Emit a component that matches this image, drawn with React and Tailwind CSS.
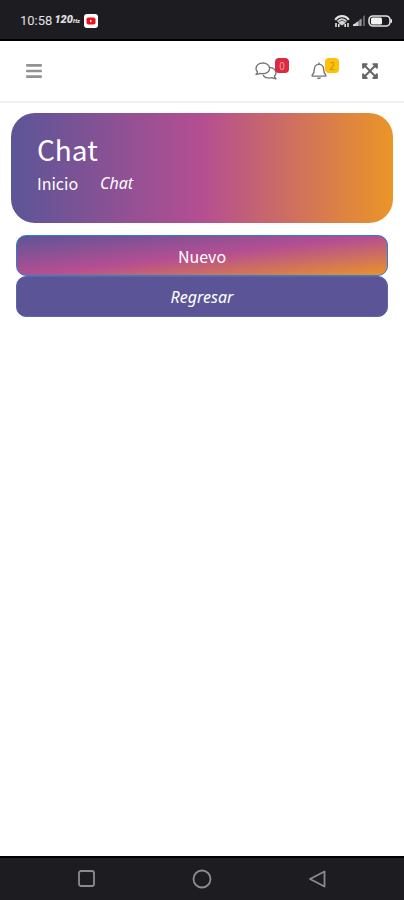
import { FaBars, FaExpandArrowsAlt } from "react-icons/fa";

const StatusBar = () => (
  <div className="flex h-[41px] items-center justify-between border-b-2 border-black bg-[#1d1c21] pr-3 pl-5 font-['Roboto',sans-serif] text-[#e0e0e0]">
    <div className="flex items-center pt-0.5">
      <span className="text-[13px]">10:58</span>
      <span className="ml-0.5 flex items-baseline font-black italic">
        <span className="text-[11px]">120</span>
        <span className="text-[6px]">Hz</span>
      </span>
      <svg className="ml-1 h-3.5 w-3.5" viewBox="0 0 14 14" aria-hidden="true">
        <rect width="14" height="14" rx="3" fill="#fff" />
        <rect x="2.5" y="3.5" width="9" height="7" rx="1.8" fill="#e8141b" />
        <path d="M6 5.8v2.4L8.2 7z" fill="#fff" />
      </svg>
    </div>
    <div className="flex items-center gap-[3px] pt-0.5">
      <svg className="h-3.5 w-4" viewBox="0 0 16 14" fill="none" aria-hidden="true">
        <path d="M1.2 5.8C4.8 1 11.2 1 14.8 5.8" stroke="#e4e4e4" strokeWidth="2.2" />
        <path d="M3.5 7.5c2.6-3 6.4-3 9 0" stroke="#d4d4d4" strokeWidth="1.8" />
        <path d="M4 8.8c2.2-2.4 5.800-2.400 8 0L8 11.500z" fill="#d4d4d4" />
        <path d="M2 13V9M4.8 13v-3M11.2 13v-3M14 13V9" stroke="#e4e4e4" strokeWidth="1.6" />
      </svg>
      <svg className="h-3 w-3" viewBox="0 0 12 12" aria-hidden="true">
        <path d="M0 11V9.5L3 8v3z" fill="#ddd" />
        <path d="M3 11V7.5L5.7 6v5z" fill="#ccc" />
        <path d="M6.2 11V5L8.7 3.5V11z" fill="#999" />
        <path d="M10 11V1.5L12 0v11z" fill="#666" />
      </svg>
      <svg className="h-3 w-6" viewBox="0 0 24 12" aria-hidden="true">
        <rect x="1" y="1" width="21" height="10" rx="4" fill="#1d1c21" stroke="#e2e2e2" strokeWidth="1.6" />
        <rect x="3" y="2.5" width="11" height="7" rx="1.5" fill="#f2f2f2" />
        <rect x="22.500" y="4" width="1.5" height="4" rx=".7" fill="#e2e2e2" />
      </svg>
    </div>
  </div>
);

const CommentsIcon = () => (
  <svg
    className="h-[18px] w-[22px]"
    viewBox="0 0 22 18"
    fill="none"
    stroke="currentColor"
    strokeWidth="1.4"
    strokeLinejoin="round"
    aria-hidden="true"
  >
    <path d="M7.8 1C4 1 1 3.4 1 6.4c0 1.4.6 2.6 1.6 3.5-.3 1-.9 1.8-1.6 2.5 1.5.1 2.9-.3 4-1 .9.3 1.8.4 2.8.4 3.8 0 6.8-2.4 6.8-5.4S11.6 1 7.8 1z" />
    <path d="M14.5 5.4c3.7.2 6.5 2.5 6.5 5.3 0 1.4-.6 2.6-1.6 3.5.3 1 .9 1.8 1.6 2.5-1.5.1-2.9-.3-4-1-.9.3-1.8.4-2.8.4-2.7 0-5-1.2-6.1-3" />
  </svg>
);

const BellIcon = () => (
  <svg
    className="h-[18px] w-4"
    viewBox="0 0 16 18"
    fill="none"
    stroke="currentColor"
    strokeWidth="1.4"
    strokeLinejoin="round"
    aria-hidden="true"
  >
    <path d="M8 .5v1.8M8 2.3c-2.7 0-4.6 2-4.6 4.7 0 3.5-.9 4.8-2.2 6.2-.3.4 0 .9.5.9h12.6c.5 0 .8-.5.5-.9-1.3-1.4-2.2-2.7-2.2-6.2 0-2.7-1.9-4.7-4.6-4.7z" />
    <path d="M6 15.5c.2 2.3 3.8 2.3 4 0z" fill="currentColor" stroke="none" />
  </svg>
);

const Navbar = () => (
  <nav className="flex h-[62px] items-center justify-between border-b-2 border-[#f1f1f1] bg-white px-[26px] text-[#777]">
    <button type="button" aria-label="Menu">
      <FaBars className="h-[18px] w-4 text-[#929292]" />
    </button>
    <div className="flex items-center">
      <button type="button" aria-label="Mensajes" className="relative mr-[34px]">
        <CommentsIcon />
        <span className="absolute -top-1 left-5 flex h-[15px] w-3.5 items-center justify-center rounded bg-[#dc2a42] text-[10px] text-[#f5a0a8]">
          0
        </span>
      </button>
      <button type="button" aria-label="Notificaciones" className="relative mr-[35px]">
        <BellIcon />
        <span className="absolute -top-1 left-3.5 flex h-[15px] w-3.5 items-center justify-center rounded bg-[#ffc107] text-[10px] text-[#c3951a]">
          2
        </span>
      </button>
      <button type="button" aria-label="Pantalla completa">
        <FaExpandArrowsAlt className="h-[18px] w-4 text-[#666]" />
      </button>
    </div>
  </nav>
);

const PageHeader = () => (
  <header className="mx-[11px] mt-2.5 rounded-[24px] bg-[linear-gradient(90deg,#5b5597,#b54e92_50%,#eb9527)] px-[26px] pt-4 pb-7 text-white">
    <h1 className="text-[28px] leading-10">Chat</h1>
    <div className="mt-0.5 flex gap-[22px] text-base leading-6">
      <a href="#inicio">Inicio</a>
      <span className="font-['Noto_Sans',sans-serif] italic">Chat</span>
    </div>
  </header>
);

const SystemBar = () => (
  <div className="mt-auto flex h-[44px] items-center justify-between border-t-2 border-black bg-[#1d1c21] px-[77px] text-[#8c8c8c]">
    <button type="button" aria-label="Recientes">
      <svg className="h-5 w-5" viewBox="0 0 20 20" fill="none" stroke="currentColor" strokeWidth="1.8">
        <rect x="2" y="2" width="15" height="15" rx="2" />
      </svg>
    </button>
    <button type="button" aria-label="Inicio">
      <svg className="h-5 w-5" viewBox="0 0 20 20" fill="none" stroke="currentColor" strokeWidth="1.8">
        <circle cx="10" cy="10" r="8.5" />
      </svg>
    </button>
    <button type="button" aria-label="Atrás">
      <svg className="h-5 w-5" viewBox="0 0 20 20" fill="none" stroke="currentColor" strokeWidth="1.8" strokeLinejoin="round">
        <path d="M17.5 2.5v15L3 10z" />
      </svg>
    </button>
  </div>
);

export default function App() {
  return (
    <div className="flex min-h-screen flex-col bg-white font-['Noto_Sans_CJK_JP',sans-serif]">
      <StatusBar />
      <Navbar />
      <main>
        <PageHeader />
        <div className="mx-4 mt-3 flex flex-col text-base text-white">
          <button
            type="button"
            className="h-[41px] rounded-[10px] border border-[#2f7fd0] bg-[linear-gradient(to_bottom_right,#5b5597,#b54e92_50%,#eb9527)] bg-origin-border"
          >
            Nuevo
          </button>
          <button
            type="button"
            className="h-[41px] rounded-[10px] border border-[#5a68a8] bg-[#5b5597] font-['Noto_Sans',sans-serif] italic"
          >
            Regresar
          </button>
        </div>
      </main>
      <SystemBar />
    </div>
  );
}
